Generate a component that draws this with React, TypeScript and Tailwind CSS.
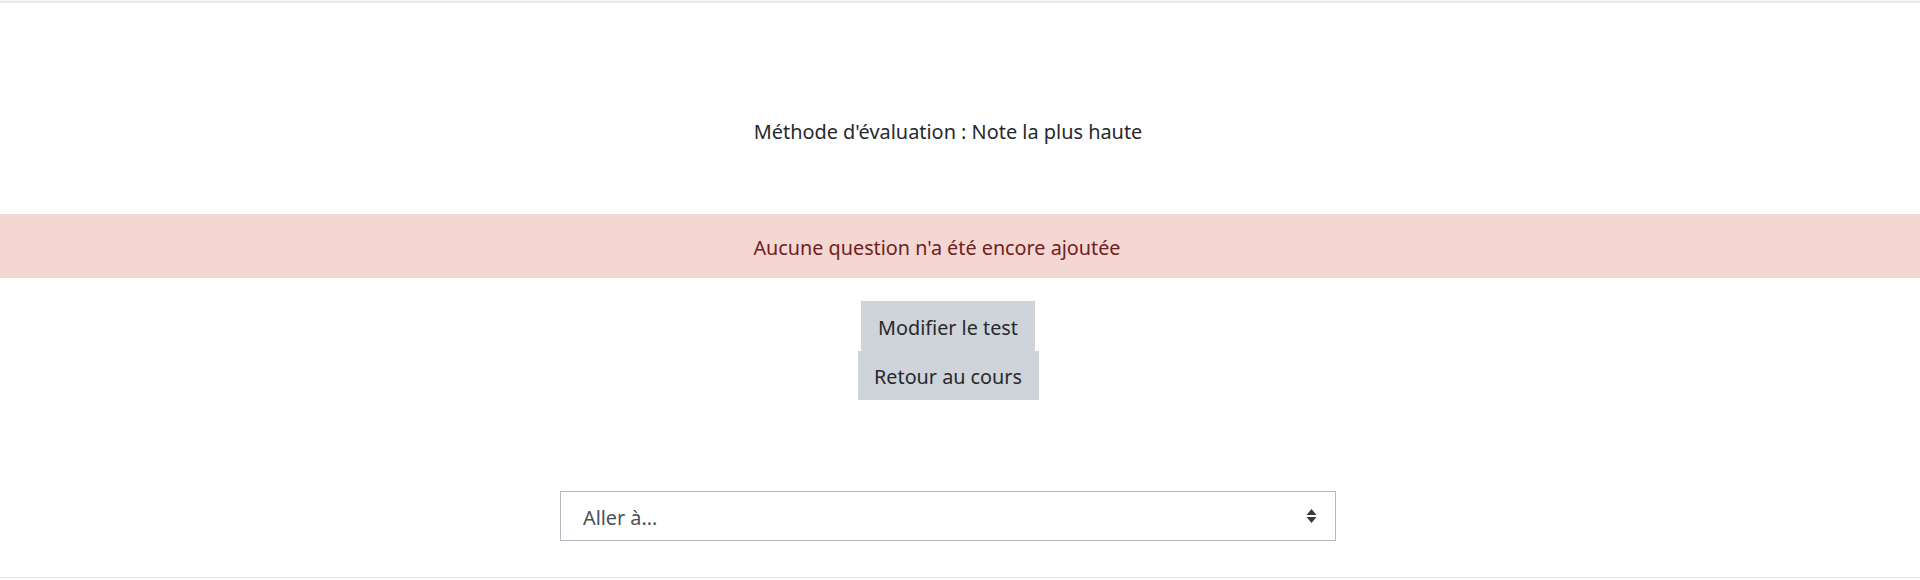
import React from "react";

export default function App() {
  return (
    <div
      className="w-[1920px] h-[580px] bg-white flex flex-col text-[#1d2125] overflow-hidden"
      style={{ fontFamily: '"Noto Sans", "Open Sans", sans-serif' }}
    >
      <div className="h-[3px] border-t-[1px] border-b-[2px] border-t-[#f3f3f3] border-b-[#ececec]" />
      <div className="pr-[24px] flex justify-center mt-[115px] h-[28px] items-center">
        <p className="text-[19.9px] leading-[28px] text-[#26292d]">Méthode d'évaluation : Note la plus haute</p>
      </div>
      <div className="mt-[68px] h-[64px] bg-[#f4d6d2] text-[#6e211e] flex items-center justify-center pr-[46px] pt-[3px]">
        <span className="text-[19.8px]">Aucune question n'a été encore ajoutée</span>
      </div>
      <div className="pr-[24px] flex flex-col items-center mt-[23px]">
        <button className="h-[50px] w-[174px] bg-[#ced4da] text-[19.8px] text-[#26292d] pt-[3px]">
          Modifier le test
        </button>
        <button className="h-[49px] w-[181px] bg-[#ced4da] text-[19.8px] text-[#26292d] pt-[3px]">
          Retour au cours
        </button>
      </div>
      <div className="pr-[24px] flex justify-center mt-[91px]">
        <div className="w-[776px] h-[50px] border border-[#b5b9bf] flex items-center justify-between pl-[22px] pr-[18px]">
          <span className="text-[19.8px] text-[#495057] pt-[3px]">Aller à...</span>
          <svg width="11" height="16" viewBox="0 0 11 16">
            <path d="M5.5 1 L10.5 7 L0.5 7 Z" fill="#343a40" />
            <path d="M5.5 15 L10.5 9 L0.5 9 Z" fill="#343a40" />
          </svg>
        </div>
      </div>
      <div className="mt-[36px] h-[1px] bg-[#dee2e6]" />
    </div>
  );
}
